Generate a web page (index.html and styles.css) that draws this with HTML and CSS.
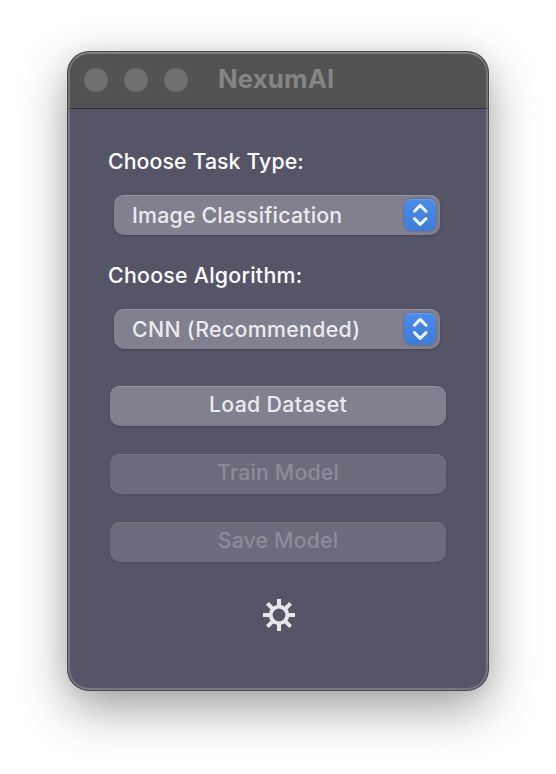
FILE: index.html
```html
<!DOCTYPE html>
<html lang="en">
<head>
<meta charset="utf-8">
<title>NexumAI</title>
<link rel="stylesheet" href="styles.css">
</head>
<body>
<main class="window">
  <header class="titlebar">
    <span class="light"></span><span class="light"></span><span class="light"></span>
    <h1 class="title">NexumAI</h1>
  </header>
  <section class="content">
    <div class="label"><span class="t-task">Choose Task Type:</span></div>
    <div class="select"><span class="t-image">Image Classification</span>
      <span class="stepper"><svg width="32" height="32" viewBox="0 0 32 32"><path d="M10.4 12.2 16.2 6.4l5.8 5.8M10.4 19.6l5.8 5.8 5.8-5.8"/></svg></span>
    </div>
    <div class="label second"><span class="t-algo">Choose Algorithm:</span></div>
    <div class="select"><span class="t-cnn">CNN (Recommended)</span>
      <span class="stepper"><svg width="32" height="32" viewBox="0 0 32 32"><path d="M10.4 12.2 16.2 6.4l5.8 5.8M10.4 19.6l5.8 5.8 5.8-5.8"/></svg></span>
    </div>
    <div class="buttons">
      <button class="button load">Load Dataset</button>
      <button class="button" disabled>Train Model</button>
      <button class="button" disabled>Save Model</button>
    </div>
    <svg class="gear" width="34" height="34" viewBox="-17 -17 34 34">
      <circle r="8.3"/>
      <path d="M0-9v-7M0 9v7M-9 0h-7M9 0h7M-6.4-6.4l-5.2-5.2M6.4-6.4l5.2-5.2M-6.4 6.4l-5.2 5.2M6.4 6.4l5.2 5.2"/>
    </svg>
  </section>
</main>
</body>
</html>
```

FILE: styles.css
```css
* { box-sizing: border-box; }
body {
  margin: 0;
  height: 774px;
  padding: 52px 68px 0;
  overflow: hidden;
  background: #fff;
  font: 500 21.3px/26px Inter, "Liberation Sans", sans-serif;
}
.window {
  position: relative;
  width: 420px;
  height: 638px;
  border-radius: 21px;
  overflow: hidden;
  background: #555567;
  box-shadow: 0 0 0 1px #4a4848, 0 18px 50px rgba(0, 0, 0, .38), 0 0 24px rgba(0, 0, 0, .06);
}
.window::after {
  content: "";
  position: absolute;
  inset: 0;
  border: 2px solid rgba(255, 255, 255, .2);
  border-top-color: rgba(255, 255, 255, .27);
  border-radius: 21px;
}
.titlebar {
  display: flex;
  align-items: center;
  gap: 16px;
  height: 57px;
  padding: 0 16px;
  border-bottom: 1px solid #343434;
  background: #525252;
}
.light { width: 24px; height: 24px; border-radius: 50%; background: #6f6f6f; }
.title { margin: -2px 0 0 14px; color: #858585; font-size: 25.8px; font-weight: 700; line-height: 30px; letter-spacing: .12px; }
.content { padding: 39px 42px 0; }
.label { height: 26px; margin-left: -2px; color: #fff; white-space: nowrap; }
.second { margin-top: 27px; }
.t-task { letter-spacing: .09px; }
.t-image { letter-spacing: .22px; }
.t-algo { letter-spacing: .28px; }
.t-cnn { letter-spacing: .34px; }
.select, .button {
  height: 40px;
  border: 0;
  border-radius: 10px;
  background: #81808e;
  color: #ebebee;
  box-shadow: inset 0 1px #9594a1, 0 1px 2px rgba(30, 30, 45, .35);
}
.select {
  display: flex;
  align-items: center;
  justify-content: space-between;
  width: 326px;
  margin: 21px 0 0 4px;
  padding: 0 4px 0 18px;
  white-space: nowrap;
}
.stepper {
  display: block;
  width: 32px;
  height: 32px;
  border-radius: 8px;
  background: linear-gradient(#4a8bec, #3f7cd8);
  box-shadow: inset 0 1px #659cec, 0 0 2px rgba(20, 30, 70, .5);
}
.stepper svg { display: block; }
.stepper path { fill: none; stroke: #eef4ff; stroke-width: 3; stroke-linecap: round; stroke-linejoin: round; }
.buttons { display: flex; flex-direction: column; gap: 28px; margin-top: 37px; }
.button { width: 336px; padding: 0 0 5px; font: inherit; letter-spacing: .16px; }
.load { letter-spacing: .33px; }
.button:disabled { background: #6c6b7b; color: #8c8b98; box-shadow: inset 0 1px #777685, 0 1px 2px rgba(30, 30, 45, .2); }
.gear { display: block; margin: 36px 0 0 151.5px; }
.gear circle, .gear path { fill: none; stroke: #e7e7e9; stroke-width: 4; }
.gear circle { stroke-width: 3.8; }
```
